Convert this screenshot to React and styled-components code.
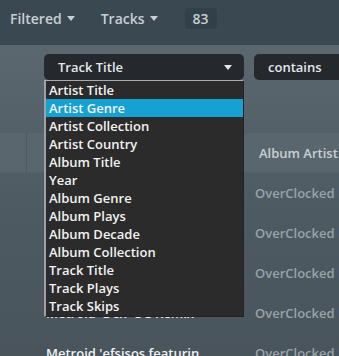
import React, { useState } from "react";
import styled, { createGlobalStyle } from "styled-components";

const GlobalStyle = createGlobalStyle`
    html, body {
        margin: 0;
        padding: 0;
        background: #4f5b63;
        overflow: hidden;
    }
    * {
        box-sizing: border-box;
    }
`;

const Page = styled.div`
    width: 339px;
    height: 356px;
    position: relative;
    overflow: hidden;
    font-family: "Open Sans", "Liberation Sans", sans-serif;
    font-weight: 600;
    background: linear-gradient(180deg, #5f6b73 0%, #4e5a62 60%, #49545b 100%);
`;

const TopBar = styled.div`
    height: 45px;
    display: flex;
    align-items: center;
    padding-left: 10px;
    padding-bottom: 8px;
    background: #3a4852;
    color: #c7cfd5;
    font-size: 14px;
`;

const Menu = styled.div`
    display: flex;
    align-items: center;
    gap: 5px;
    margin-right: ${(p) => p.$gap}px;
`;

const Caret = styled.span`
    width: 0;
    height: 0;
    border-left: 4px solid transparent;
    border-right: 4px solid transparent;
    border-top: 5px solid ${(p) => p.$color || "#c7cfd5"};
`;

const Badge = styled.div`
    height: 21px;
    padding: 0 8px;
    border-radius: 4px;
    background: #314049;
    display: flex;
    align-items: center;
`;

const FilterRow = styled.div`
    height: 88px;
    display: flex;
    padding: 9px 0 0 44px;
    gap: 10px;
    position: relative;
`;

const SelectBox = styled.div`
    width: ${(p) => p.$width}px;
    height: 26px;
    border-radius: 5px;
    background: #25292d;
    color: #e4e8ea;
    font-size: 13px;
    display: flex;
    align-items: center;
    justify-content: space-between;
    padding: 0 12px 0 14px;
    flex-shrink: 0;
`;

const List = styled.div`
    position: absolute;
    left: 44px;
    top: 80px;
    width: 200px;
    background: #2b2b2b;
    border-top: 1px solid #a9acae;
    border-left: 2px solid #9da1a4;
    border-right: 1px solid #222;
    border-bottom: 1px solid #222;
    padding-bottom: 1px;
    z-index: 5;
`;

const Item = styled.div`
    height: 18px;
    line-height: 18px;
    padding-left: 3px;
    font-size: 13px;
    color: #f2f2f2;
    background: ${(p) => (p.$active ? "#16a1d2" : "transparent")};
`;

const HeaderRow = styled.div`
    height: 40px;
    display: flex;
    background: #5a666e;
    border-bottom: 1px solid #55616a;
`;

const Cell = styled.div`
    width: ${(p) => p.$width}px;
    flex-shrink: 0;
    display: flex;
    align-items: center;
    padding-left: ${(p) => p.$pad || 0}px;
    font-size: 13px;
    white-space: nowrap;
    overflow: hidden;
    color: ${(p) => p.$color || "#c9d0d5"};
    border-right: ${(p) => (p.$sep ? "1px solid #4d5961" : "none")};
`;

const Row = styled.div`
    height: 40px;
    display: flex;
`;

const options = [
    "Artist Title",
    "Artist Genre",
    "Artist Collection",
    "Artist Country",
    "Album Title",
    "Year",
    "Album Genre",
    "Album Plays",
    "Album Decade",
    "Album Collection",
    "Track Title",
    "Track Plays",
    "Track Skips",
];

const rows = [
    "Metroid 'Brinstar' OC Remix",
    "Metroid 'Norfair' OC Remix",
    "Metroid 'Kraid' OC Remix",
    "Metroid 'Dex' OC Remix",
    "Metroid 'efsisos featurin",
];

const App = () => {
    const [active, setActive] = useState("Artist Genre");

    return (
        <Page>
            <GlobalStyle />
            <TopBar>
                <Menu $gap={26}>Filtered <Caret /></Menu>
                <Menu $gap={27}>Tracks <Caret /></Menu>
                <Badge>83</Badge>
            </TopBar>
            <FilterRow>
                <SelectBox $width={200}>
                    Track Title <Caret $color="#e4e8ea" />
                </SelectBox>
                <SelectBox $width={120}>contains</SelectBox>
            </FilterRow>
            <List>
                {options.map((o) => (
                    <Item key={o} $active={o === active} onMouseEnter={() => setActive(o)}>
                        {o}
                    </Item>
                ))}
            </List>
            <HeaderRow>
                <Cell $width={27} $sep />
                <Cell $width={224} />
                <Cell $width={200} $pad={8}>Album Artist</Cell>
            </HeaderRow>
            {rows.map((r) => (
                <Row key={r}>
                    <Cell $width={27} />
                    <Cell $width={224} $pad={19} $color="#eef1f3">{r}</Cell>
                    <Cell $width={200} $pad={4} $color="#98a2a8">OverClocked Remix</Cell>
                </Row>
            ))}
        </Page>
    );
};

export default App;
